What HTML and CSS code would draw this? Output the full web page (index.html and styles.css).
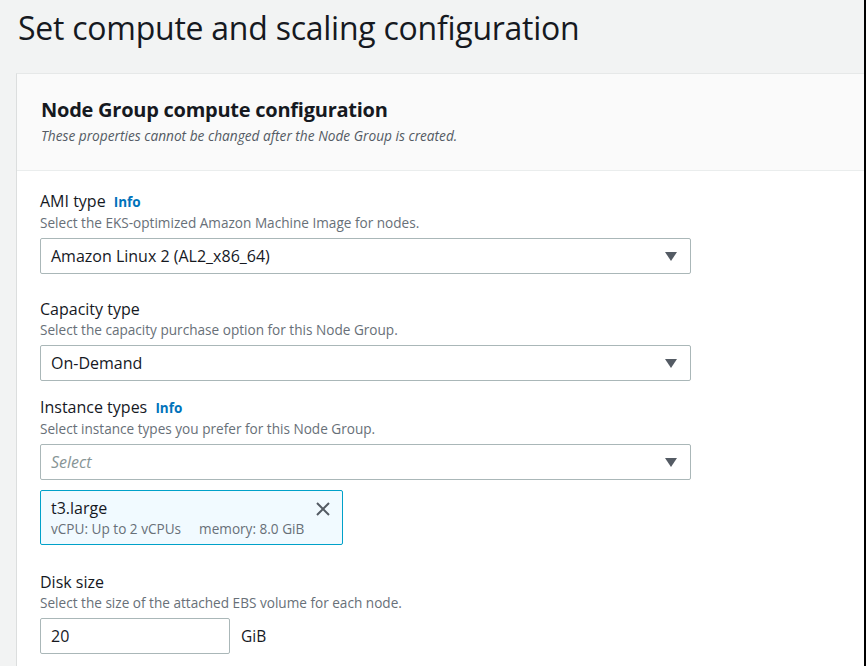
FILE: index.html
```html
<!DOCTYPE html>
<html>
<head>
<meta charset="utf-8">
<link rel="stylesheet" href="styles.css">
</head>
<body>
<div class="frame">
  <h1 class="page-title">Set compute and scaling configuration</h1>
  <section class="card">
    <header class="card-header">
      <h2 class="card-title">Node Group compute configuration</h2>
      <p class="card-sub">These properties cannot be changed after the Node Group is created.</p>
    </header>
    <div class="card-body">
      <div class="field field-ami">
        <div class="label">AMI type <a class="info">Info</a></div>
        <div class="desc">Select the EKS-optimized Amazon Machine Image for nodes.</div>
        <div class="select"><span class="value">Amazon Linux 2 (AL2_x86_64)</span><span class="caret"></span></div>
      </div>
      <div class="field field-cap">
        <div class="label">Capacity type</div>
        <div class="desc">Select the capacity purchase option for this Node Group.</div>
        <div class="select"><span class="value">On-Demand</span><span class="caret"></span></div>
      </div>
      <div class="field field-inst">
        <div class="label">Instance types <a class="info">Info</a></div>
        <div class="desc">Select instance types you prefer for this Node Group.</div>
        <div class="select"><span class="placeholder">Select</span><span class="caret"></span></div>
        <div class="token">
          <div class="token-text">
            <div class="token-name">t3.large</div>
            <div class="token-meta"><span>vCPU: Up to 2 vCPUs</span><span>memory: 8.0 GiB</span></div>
          </div>
          <svg class="token-x" width="16" height="16" viewBox="0 0 16 16"><path d="M2 2 L14 14 M14 2 L2 14" stroke="#545b64" stroke-width="2" fill="none"/></svg>
        </div>
      </div>
      <div class="field field-disk">
        <div class="label">Disk size</div>
        <div class="desc">Select the size of the attached EBS volume for each node.</div>
        <div class="disk-row">
          <div class="input">20</div>
          <span class="unit">GiB</span>
        </div>
      </div>
    </div>
  </section>
</div>
</body>
</html>
```
FILE: styles.css
```css
* { box-sizing: border-box; }
html, body { margin: 0; padding: 0; }
body {
  background: #f2f3f3;
  font-family: "Open Sans", "Noto Sans", sans-serif;
  color: #16191f;
  overflow: hidden;
}
.frame {
  height: 666px;
  border-right: 2px solid #000;
  padding-top: 8px;
}
.page-title {
  margin: 0 0 25px 18px;
  font-size: 32px;
  line-height: 40px;
  font-weight: 400;
  color: #16191f;
  letter-spacing: -0.25px;
}
.card {
  margin-left: 16px;
  background: #fff;
  border-left: 1px solid #dcdede;
  border-top: 1px solid #e6e8e8;
  height: 600px;
}
.card-header {
  background: #fafafa;
  padding: 22px 24px 24px 24px;
  border-bottom: 1px solid #eaeded;
}
.card-title {
  margin: 0;
  font-size: 20px;
  line-height: 28px;
  font-weight: 700;
  letter-spacing: -0.25px;
}
.card-sub {
  margin: 2px 0 0 0;
  font-size: 13.7px;
  line-height: 20px;
  font-style: italic;
  color: #545b64;
}
.card-body {
  padding: 19px 24px 0 23px;
}
.field-cap { margin-top: 24px; }
.field-inst { margin-top: 15px; }
.field-disk { margin-top: 26px; }
.label {
  font-size: 16px;
  line-height: 22px;
  color: #16191f;
}
.info {
  font-size: 13.5px;
  font-weight: 700;
  color: #0073bb;
  margin-left: 4px;
}
.desc {
  font-size: 13.6px;
  line-height: 20px;
  color: #687078;
}
.select {
  margin-top: 5px;
  width: 651px;
  height: 36px;
  border: 1px solid #aab7b8;
  border-radius: 2px;
  background: #fff;
  display: flex;
  align-items: center;
  justify-content: space-between;
  padding: 0 13px 0 10px;
  font-size: 16px;
}
.placeholder { font-style: italic; color: #879596; }
.caret {
  width: 0;
  height: 0;
  border-left: 6px solid transparent;
  border-right: 6px solid transparent;
  border-top: 9px solid #545b64;
}
.token {
  margin-top: 10px;
  width: 303px;
  height: 55px;
  background: #f1faff;
  border: 1px solid #00a1c9;
  border-radius: 2px;
  display: flex;
  justify-content: space-between;
  align-items: flex-start;
  padding: 6px 11px 0 10px;
}
.token-name { font-size: 16px; line-height: 22px; }
.token-meta {
  font-size: 13.6px;
  line-height: 20px;
  color: #687078;
  display: flex;
  gap: 18px;
}
.token-x { margin-top: 4px; }
.disk-row {
  margin-top: 5px;
  display: flex;
  align-items: center;
  gap: 11px;
}
.input {
  width: 190px;
  height: 36px;
  border: 1px solid #aab7b8;
  border-radius: 2px;
  background: #fff;
  display: flex;
  align-items: center;
  padding-left: 10px;
  font-size: 16px;
}
.unit { font-size: 15.5px; }
```
